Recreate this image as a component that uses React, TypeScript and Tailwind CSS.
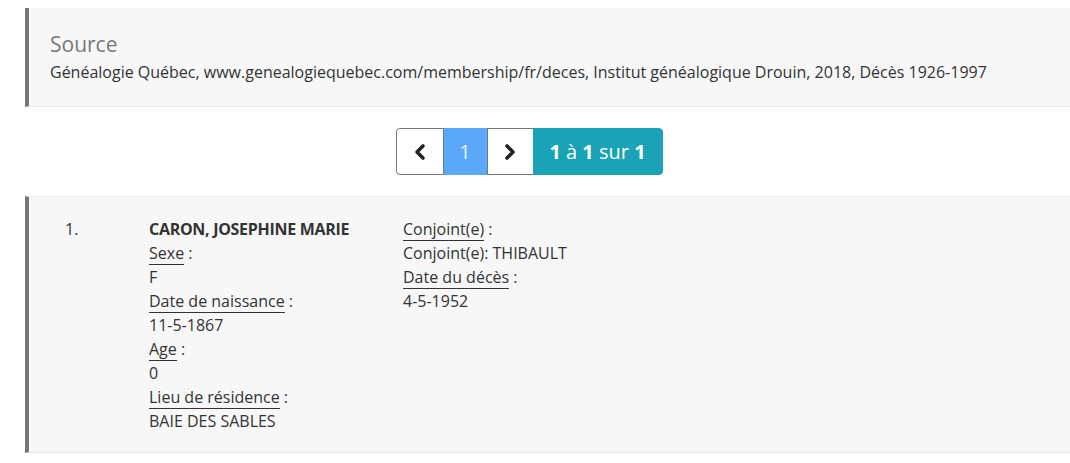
import React from "react";

function Label({ children }: { children: React.ReactNode }) {
  return (
    <div>
      <span className="border-b border-[#333]">{children}</span> :
    </div>
  );
}

export default function App() {
  return (
    <div
      className="w-[1070px] h-[463px] overflow-hidden bg-white text-[#333]"
      style={{ fontFamily: '"Open Sans", "Noto Sans", sans-serif' }}
    >
      <div className="pt-[8px] pl-[25px]">
        <div className="w-[1080px] h-[99px] bg-[#f7f7f8] border-l-[4px] border-[#777] border-b border-b-[#e6e6e6] pl-[21px] pt-[22px]">
          <div className="text-[21px] leading-[28px] text-[#777]">Source</div>
          <div className="text-[16px] leading-[22px] mt-[3px] text-[#333]">
            Généalogie Québec, www.genealogiequebec.com/membership/fr/deces, Institut généalogique Drouin, 2018, Décès 1926-1997
          </div>
        </div>
      </div>

      <div className="flex justify-center pr-[12px] mt-[21px]">
        <div className="flex h-[47px] rounded-[4px] overflow-hidden">
          <div className="w-[47px] flex items-center justify-center bg-white border border-[#777] border-r-0 rounded-l-[4px]">
            <svg width="14" height="18" viewBox="0 0 14 18">
              <polyline points="10,3 4,9 10,15" fill="none" stroke="#222" strokeWidth="3.6" strokeLinecap="round" strokeLinejoin="round" />
            </svg>
          </div>
          <div className="w-[44px] flex items-center justify-center bg-[#5aa8f7] border-y border-[#5aa8f7] text-[20px] text-[#e8f2fd] border-l border-l-[#777]">
            1
          </div>
          <div className="w-[46px] flex items-center justify-center bg-white border border-[#777] border-r-0">
            <svg width="14" height="18" viewBox="0 0 14 18">
              <polyline points="4,3 10,9 4,15" fill="none" stroke="#222" strokeWidth="3.6" strokeLinecap="round" strokeLinejoin="round" />
            </svg>
          </div>
          <div className="w-[130px] flex items-center justify-center bg-[#1aa3b6] text-white text-[20px] rounded-r-[4px]">
            <span>
              <b>1</b> à <b>1</b> sur <b>1</b>
            </span>
          </div>
        </div>
      </div>

      <div className="pl-[25px] mt-[21px]">
        <div className="w-[1080px] h-[257px] bg-[#f7f7f8] border-l-[4px] border-[#777] border-t border-t-[#ececec] border-b border-b-[#e6e6e6] pt-[20px] pl-[36px] flex text-[16px] leading-[24px] text-[#333]">
          <div className="w-[84px]">1.</div>
          <div className="w-[254px]">
            <div className="font-bold tracking-[-0.3px]">CARON, JOSEPHINE MARIE</div>
            <Label>Sexe</Label>
            <div>F</div>
            <Label>Date de naissance</Label>
            <div>11-5-1867</div>
            <Label>Age</Label>
            <div>0</div>
            <Label>Lieu de résidence</Label>
            <div>BAIE DES SABLES</div>
          </div>
          <div>
            <Label>Conjoint(e)</Label>
            <div>Conjoint(e): THIBAULT</div>
            <Label>Date du décès</Label>
            <div>4-5-1952</div>
          </div>
        </div>
      </div>
    </div>
  );
}
